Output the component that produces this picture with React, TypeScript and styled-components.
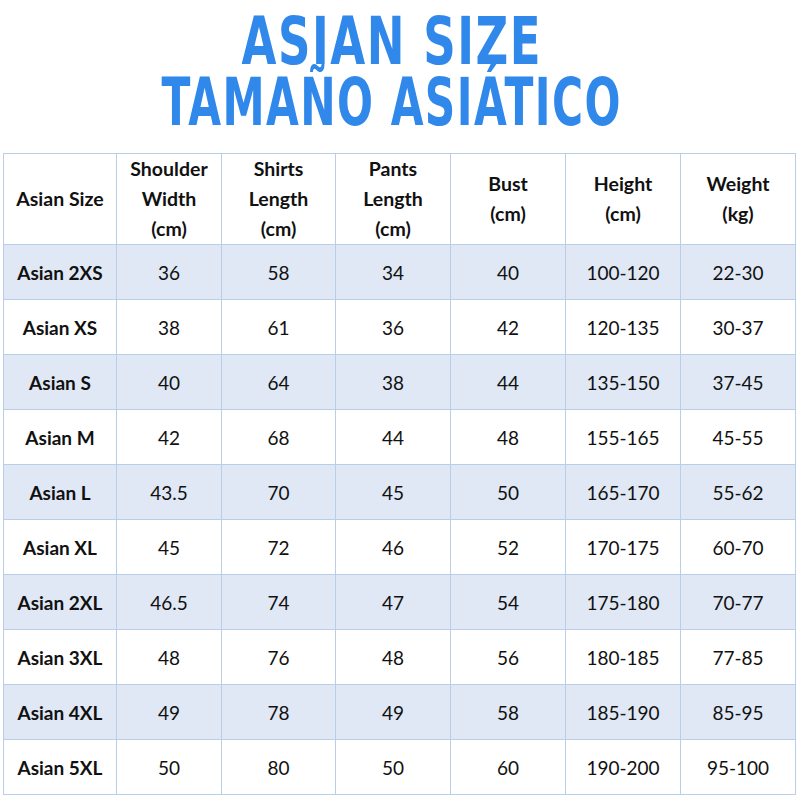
import React from "react";
import styled, { createGlobalStyle } from "styled-components";

const Global = createGlobalStyle`
  html, body { margin: 0; padding: 0; background: #ffffff; }
  body { width: 800px; height: 800px; overflow: hidden; }
`;

const Page = styled.div`
  width: 800px;
  height: 800px;
  display: flex;
  flex-direction: column;
  background: #fff;
`;

const Title = styled.div`
  height: 153px;
  display: flex;
  flex-direction: column;
  align-items: center;
  justify-content: flex-start;
  padding-top: 11px;
  padding-right: 17px;
  box-sizing: border-box;
`;

const TitleLine = styled.div<{ $scale: number }>`
  font-family: "DejaVu Sans Condensed", "DejaVu Sans", sans-serif;
  font-weight: 700;
  font-size: 66px;
  line-height: 61px;
  height: 61px;
  color: #2f88ea;
  white-space: nowrap;
  letter-spacing: 2px;
  transform: scaleX(${(p) => p.$scale});
  transform-origin: center;
`;

const Table = styled.table`
  margin-left: 3px;
  border-collapse: collapse;
  table-layout: fixed;
  width: 793px;
  font-family: "Lato", "Noto Sans", sans-serif;
  color: #111;
`;

const HeadCell = styled.th`
  height: 89px;
  border: 1px solid #b9cfe8;
  font-weight: 700;
  font-size: 19.5px;
  line-height: 30px;
  text-align: center;
  vertical-align: middle;
  padding: 0;
`;

const Row = styled.tr<{ $shaded: boolean }>`
  height: 55px;
  background: ${(p) => (p.$shaded ? "#dfe8f4" : "#ffffff")};
`;

const Cell = styled.td<{ $bold?: boolean }>`
  border: 1px solid #b9cfe8;
  text-align: center;
  vertical-align: middle;
  font-size: 19px;
  font-weight: ${(p) => (p.$bold ? 700 : 400)};
  padding: 0;
`;

const widths = [113, 105, 114, 115, 115, 115, 115];
const headers = [
  ["Asian Size"],
  ["Shoulder", "Width", "(cm)"],
  ["Shirts", "Length", "(cm)"],
  ["Pants", "Length", "(cm)"],
  ["Bust", "(cm)"],
  ["Height", "(cm)"],
  ["Weight", "(kg)"],
];

const rows = [
  ["Asian 2XS", "36", "58", "34", "40", "100-120", "22-30"],
  ["Asian XS", "38", "61", "36", "42", "120-135", "30-37"],
  ["Asian S", "40", "64", "38", "44", "135-150", "37-45"],
  ["Asian M", "42", "68", "44", "48", "155-165", "45-55"],
  ["Asian L", "43.5", "70", "45", "50", "165-170", "55-62"],
  ["Asian XL", "45", "72", "46", "52", "170-175", "60-70"],
  ["Asian 2XL", "46.5", "74", "47", "54", "175-180", "70-77"],
  ["Asian 3XL", "48", "76", "48", "56", "180-185", "77-85"],
  ["Asian 4XL", "49", "78", "49", "58", "185-190", "85-95"],
  ["Asian 5XL", "50", "80", "50", "60", "190-200", "95-100"],
];

export default function App() {
  return (
    <Page>
      <Global />
      <Title>
        <TitleLine $scale={0.76}>ASIAN SIZE</TitleLine>
        <TitleLine $scale={0.713}>TAMAÑO ASIÁTICO</TitleLine>
      </Title>
      <Table>
        <colgroup>
          {widths.map((w, i) => (
            <col key={i} style={{ width: w }} />
          ))}
        </colgroup>
        <thead>
          <tr>
            {headers.map((h, i) => (
              <HeadCell key={i}>
                {h.map((l, j) => (
                  <div key={j}>{l}</div>
                ))}
              </HeadCell>
            ))}
          </tr>
        </thead>
        <tbody>
          {rows.map((r, i) => (
            <Row key={i} $shaded={i % 2 === 0}>
              {r.map((c, j) => (
                <Cell key={j} $bold={j === 0}>
                  {c}
                </Cell>
              ))}
            </Row>
          ))}
        </tbody>
      </Table>
    </Page>
  );
}
